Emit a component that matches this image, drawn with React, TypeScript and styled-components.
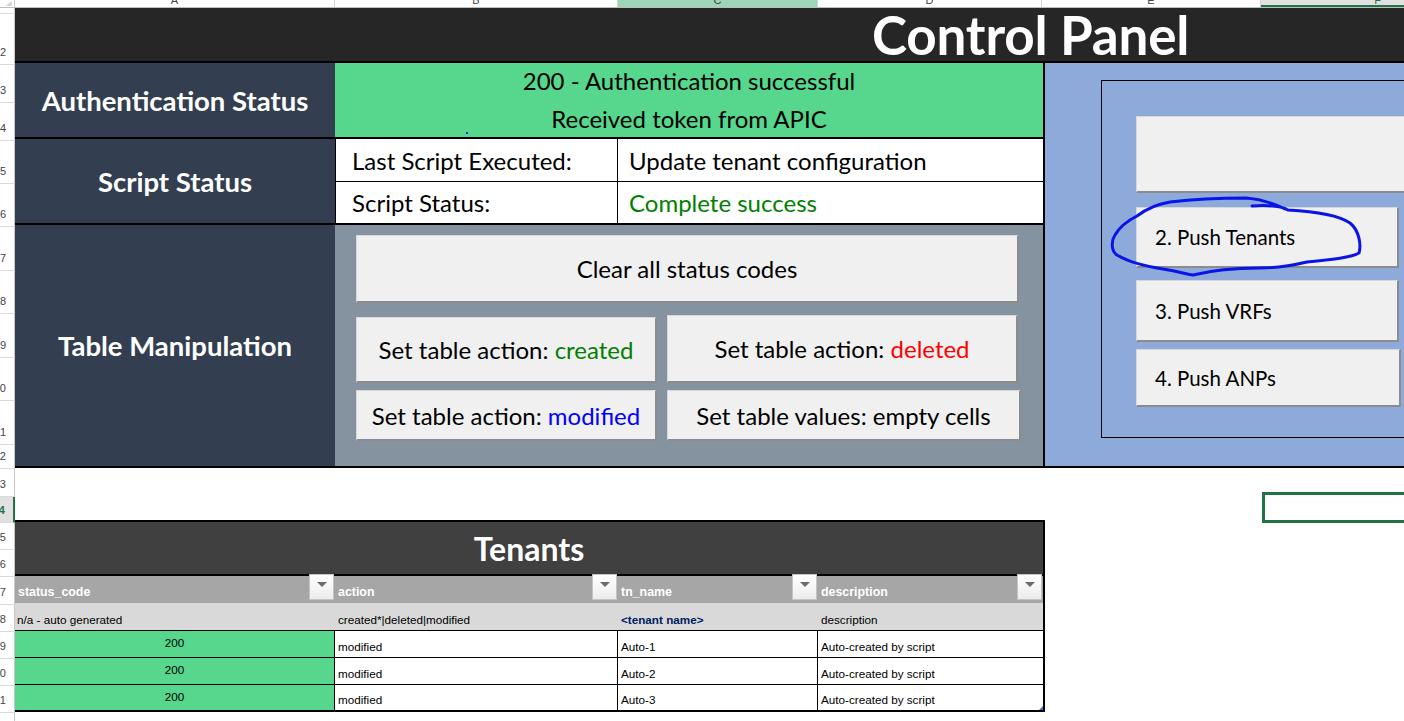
import React from 'react';
import styled, { createGlobalStyle } from 'styled-components';

const Global = createGlobalStyle`
  html, body { margin: 0; padding: 0; background: #ffffff; overflow: hidden; }
  body { width: 1404px; height: 721px; }
  * { box-sizing: border-box; }
`;

const CALIBRI = `'Lato', 'Carlito', 'Open Sans', sans-serif`;
const SMALL = `'Liberation Sans', Arial, sans-serif`;

const Sheet = styled.div`
  width: 1404px;
  height: 721px;
  overflow: hidden;
  display: flex;
  flex-direction: column;
  background: #fff;
`;

/* ---------- column header strip ---------- */
const ColHeaderRow = styled.div`
  display: flex;
  height: 8px;
  flex-shrink: 0;
  border-bottom: 1px solid #bdbdbd;
`;

const Corner = styled.div`
  width: 15px;
  flex-shrink: 0;
  border-right: 1px solid #c8c8c8;
  background: #fff;
  display: flex;
  justify-content: flex-end;
  align-items: flex-end;
  padding: 0 2px 1px 0;
`;

const CornerTri = styled.span`
  width: 0;
  height: 0;
  border-left: 7px solid transparent;
  border-bottom: 5px solid #d6d6d6;
`;

const ColHead = styled.div<{ $w: number; $mode?: 'col' | 'cell' }>`
  width: ${(p) => p.$w}px;
  flex-shrink: 0;
  overflow: hidden;
  display: flex;
  justify-content: center;
  border-right: 1px solid #d4d4d4;
  background: ${(p) => (p.$mode === 'col' ? '#9fd5b7' : p.$mode === 'cell' ? '#e1e1e1' : '#fff')};
  box-shadow: ${(p) => (p.$mode === 'cell' ? 'inset 0 -2px 0 #217346' : 'none')};
`;

const ColLabel = styled.span<{ $active?: boolean }>`
  font-family: ${SMALL};
  font-size: 11px;
  line-height: 11px;
  margin-top: -5px;
  color: ${(p) => (p.$active ? '#217346' : '#444')};
`;

/* ---------- body ---------- */
const Body = styled.div`
  display: flex;
  flex: 1;
  min-height: 0;
`;

const RowHeads = styled.div`
  width: 15px;
  flex-shrink: 0;
  display: flex;
  flex-direction: column;
`;

const RowHead = styled.div<{ $h: number; $active?: boolean }>`
  height: ${(p) => p.$h}px;
  flex-shrink: 0;
  overflow: hidden;
  display: flex;
  align-items: flex-end;
  justify-content: flex-end;
  padding: 0 8px 5px 0;
  line-height: 13px;
  border-bottom: 1px solid #dadada;
  border-right: ${(p) => (p.$active ? '2px solid #217346' : '1px solid #c8c8c8')};
  background: ${(p) => (p.$active ? '#e1e1e1' : '#fff')};
  color: ${(p) => (p.$active ? '#217346' : '#444')};
  font-family: ${SMALL};
  font-weight: ${(p) => (p.$active ? 700 : 400)};
  font-size: 11px;
  white-space: nowrap;
`;

const Content = styled.div`
  width: 1700px;
  flex-shrink: 0;
  display: flex;
  flex-direction: column;
`;

/* ---------- title ---------- */
const TitleBar = styled.div`
  height: 55px;
  flex-shrink: 0;
  background: #262626;
  border-bottom: 2px solid #000;
  padding-left: 857px;
  display: flex;
  align-items: center;
`;

const TitleText = styled.h1`
  margin: 0;
  font-family: ${CALIBRI};
  font-weight: 700;
  font-size: 53px;
  line-height: 1;
  color: #fff;
  letter-spacing: -0.2px;
`;

/* ---------- dashboard ---------- */
const Dashboard = styled.div`
  display: flex;
  height: 405px;
  flex-shrink: 0;
  border-bottom: 2px solid #000;
`;

const LeftCol = styled.div`
  width: 320px;
  flex-shrink: 0;
  display: flex;
  flex-direction: column;
`;

const SectionLabel = styled.div<{ $h?: number; $last?: boolean }>`
  height: ${(p) => (p.$h ? `${p.$h}px` : 'auto')};
  flex: ${(p) => (p.$h ? '0 0 auto' : '1')};
  background: #333f50;
  border-bottom: ${(p) => (p.$last ? 'none' : '2px solid #000')};
  display: flex;
  align-items: center;
  justify-content: center;
  font-family: ${CALIBRI};
  font-weight: 700;
  font-size: 27.5px;
  color: #fff;
`;

const MidCol = styled.div`
  width: 708px;
  flex-shrink: 0;
  display: flex;
  flex-direction: column;
`;

const AuthBlock = styled.div`
  height: 76px;
  flex-shrink: 0;
  background: #57d68d;
  border-bottom: 2px solid #000;
  display: flex;
  flex-direction: column;
  justify-content: center;
  align-items: center;
  position: relative;
  font-family: ${CALIBRI};
  font-size: 24px;
  line-height: 38px;
  color: #000;
`;

const CursorDot = styled.span`
  position: absolute;
  left: 131px;
  top: 69px;
  width: 2px;
  height: 2px;
  background: #1a2bd8;
`;

const ScriptRow = styled.div<{ $last?: boolean }>`
  height: 43px;
  flex-shrink: 0;
  display: flex;
  background: #fff;
  border-left: 1px solid #000;
  border-bottom: ${(p) => (p.$last ? '2px' : '1px')} solid #000;
`;

const ScriptCell = styled.div<{ $w?: number; $pad: number; $color?: string }>`
  width: ${(p) => (p.$w ? `${p.$w}px` : 'auto')};
  flex: ${(p) => (p.$w ? '0 0 auto' : '1')};
  border-right: ${(p) => (p.$w ? '1px solid #000' : 'none')};
  padding-left: ${(p) => p.$pad}px;
  display: flex;
  align-items: center;
  font-family: ${CALIBRI};
  font-size: 24px;
  color: ${(p) => p.$color || '#000'};
  white-space: nowrap;
`;

const ManipPanel = styled.div`
  flex: 1;
  background: #85929f;
  padding: 10px 0 0 21px;
  display: flex;
  flex-direction: column;
`;

const FormButton = styled.div<{ $w: number; $h: number; $mt?: number }>`
  width: ${(p) => p.$w}px;
  height: ${(p) => p.$h}px;
  margin-top: ${(p) => p.$mt || 0}px;
  flex-shrink: 0;
  background: #f0f0f0;
  border-top: 1px solid #d8d8d8;
  border-left: 1px solid #d8d8d8;
  border-right: 2px solid #8c8c8c;
  border-bottom: 2px solid #8c8c8c;
  display: flex;
  align-items: center;
  justify-content: center;
  font-family: ${CALIBRI};
  font-size: 24px;
  color: #000;
  white-space: nowrap;
`;

const ButtonRow = styled.div<{ $mt: number }>`
  display: flex;
  gap: 10px;
  margin-top: ${(p) => p.$mt}px;
  align-items: flex-start;
`;

const Accent = styled.span<{ $c: string }>`
  color: ${(p) => p.$c};
`;

const RightPanel = styled.div`
  flex: 1;
  background: #8eaadb;
  border-left: 2px solid #000;
  padding: 17px 0 0 56px;
  position: relative;
`;

const Frame = styled.div`
  height: 358px;
  border: 1px solid #000;
  border-right: none;
  padding: 35px 0 0 34px;
  display: flex;
  flex-direction: column;
  align-items: flex-start;
`;

const PushButton = styled.div<{ $w: number; $h: number; $mt: number }>`
  width: ${(p) => p.$w}px;
  height: ${(p) => p.$h}px;
  margin-top: ${(p) => p.$mt}px;
  flex-shrink: 0;
  background: #f0f0f0;
  border-top: 1px solid #d8d8d8;
  border-left: 1px solid #d8d8d8;
  border-right: 2px solid #8c8c8c;
  border-bottom: 2px solid #8c8c8c;
  display: flex;
  align-items: center;
  padding-left: 18px;
  font-family: ${CALIBRI};
  font-size: 20.5px;
  color: #000;
`;

const Scribble = styled.svg`
  position: absolute;
  left: 0;
  top: 0;
  width: 400px;
  height: 405px;
  pointer-events: none;
  overflow: visible;
`;

/* ---------- spacer with selection ---------- */
const Spacer = styled.div`
  height: 52px;
  flex-shrink: 0;
  position: relative;
`;

const SelBox = styled.div`
  position: absolute;
  left: 1247px;
  top: 24px;
  width: 220px;
  height: 31px;
  border: 3px solid #217346;
`;

/* ---------- tenants table ---------- */
const Table = styled.div`
  width: 1030px;
  flex-shrink: 0;
  border-right: 2px solid #000;
  border-bottom: 2px solid #000;
  position: relative;
`;

const TableTitle = styled.div`
  height: 56px;
  background: #404040;
  border-top: 2px solid #000;
  border-bottom: 2px solid #000;
  display: flex;
  align-items: center;
  justify-content: center;
  font-family: ${CALIBRI};
  font-weight: 700;
  font-size: 32px;
  color: #fff;
`;

const TRow = styled.div<{ $h: number; $bg?: string; $lined?: boolean }>`
  display: flex;
  height: ${(p) => p.$h}px;
  background: ${(p) => p.$bg || '#fff'};
  border-top: ${(p) => (p.$lined ? '1px solid #000' : 'none')};
`;

const HeadCell = styled.div<{ $w: number }>`
  width: ${(p) => p.$w}px;
  flex-shrink: 0;
  position: relative;
  display: flex;
  align-items: flex-end;
  padding: 0 0 4px 3px;
  font-family: ${SMALL};
  font-weight: 700;
  font-size: 12.4px;
  color: #fff;
`;

const DropBtn = styled.div`
  position: absolute;
  right: 1px;
  top: -2px;
  width: 25px;
  height: 26px;
  border: 1px solid #c4c4c4;
  background: linear-gradient(#ffffff, #ececec);
  display: flex;
  justify-content: center;
  padding-top: 7px;
`;

const Tri = styled.span`
  width: 0;
  height: 0;
  border-left: 5px solid transparent;
  border-right: 5px solid transparent;
  border-top: 5px solid #6b6b6b;
`;

const Cell = styled.div<{ $w: number; $center?: boolean; $bg?: string; $border?: boolean; $color?: string; $bold?: boolean; $pad?: number }>`
  width: ${(p) => p.$w}px;
  flex-shrink: 0;
  display: flex;
  align-items: ${(p) => (p.$center ? 'center' : 'flex-end')};
  justify-content: ${(p) => (p.$center ? 'center' : 'flex-start')};
  padding: ${(p) => (p.$center ? '0 0 3px 0' : `0 0 4px ${p.$pad ?? 3}px`)};
  background: ${(p) => p.$bg || 'transparent'};
  border-right: ${(p) => (p.$border ? '1px solid #000' : 'none')};
  font-family: ${SMALL};
  font-size: 11.7px;
  font-weight: ${(p) => (p.$bold ? 700 : 400)};
  color: ${(p) => p.$color || '#000'};
  white-space: nowrap;
`;

const Handle = styled.span`
  position: absolute;
  right: 0;
  bottom: 0;
  width: 0;
  height: 0;
  border-left: 4px solid transparent;
  border-bottom: 4px solid #4472c4;
`;

const COLS: { key: string; w: number; mode?: 'col' | 'cell' }[] = [
  { key: 'A', w: 320 },
  { key: 'B', w: 283 },
  { key: 'C', w: 200, mode: 'col' },
  { key: 'D', w: 224 },
  { key: 'E', w: 219 },
  { key: 'F', w: 234, mode: 'cell' },
];

const ROWS: { n: number; h: number }[] = [
  { n: 1, h: 4 },
  { n: 2, h: 51 },
  { n: 3, h: 38 },
  { n: 4, h: 38 },
  { n: 5, h: 43 },
  { n: 6, h: 43 },
  { n: 7, h: 44 },
  { n: 8, h: 43 },
  { n: 9, h: 44 },
  { n: 10, h: 43 },
  { n: 11, h: 44 },
  { n: 12, h: 24 },
  { n: 13, h: 28 },
  { n: 14, h: 26 },
  { n: 15, h: 27 },
  { n: 16, h: 27 },
  { n: 17, h: 28 },
  { n: 18, h: 27 },
  { n: 19, h: 27 },
  { n: 20, h: 27 },
  { n: 21, h: 27 },
  { n: 22, h: 27 },
];

const TCOLS = [320, 283, 200, 225];
const HEADERS = ['status_code', 'action', 'tn_name', 'description'];
const DATA = [
  ['200', 'modified', 'Auto-1', 'Auto-created by script'],
  ['200', 'modified', 'Auto-2', 'Auto-created by script'],
  ['200', 'modified', 'Auto-3', 'Auto-created by script'],
];

export default function App() {
  return (
    <>
      <Global />
      <Sheet>
        <ColHeaderRow>
          <Corner>
            <CornerTri />
          </Corner>
          {COLS.map((c) => (
            <ColHead key={c.key} $w={c.w} $mode={c.mode}>
              <ColLabel $active={c.mode === 'cell'}>{c.key}</ColLabel>
            </ColHead>
          ))}
        </ColHeaderRow>
        <Body>
          <RowHeads>
            {ROWS.map((r) => (
              <RowHead key={r.n} $h={r.h} $active={r.n === 14}>
                {r.n > 1 ? r.n : null}
              </RowHead>
            ))}
          </RowHeads>
          <Content>
            <TitleBar>
              <TitleText>Control Panel</TitleText>
            </TitleBar>
            <Dashboard>
              <LeftCol>
                <SectionLabel $h={76}>Authentication Status</SectionLabel>
                <SectionLabel $h={86}>Script Status</SectionLabel>
                <SectionLabel $last>Table Manipulation</SectionLabel>
              </LeftCol>
              <MidCol>
                <AuthBlock>
                  <div>200 - Authentication successful</div>
                  <div>Received token from APIC</div>
                  <CursorDot />
                </AuthBlock>
                <ScriptRow>
                  <ScriptCell $w={282} $pad={16}>Last Script Executed:</ScriptCell>
                  <ScriptCell $pad={11}>Update tenant configuration</ScriptCell>
                </ScriptRow>
                <ScriptRow $last>
                  <ScriptCell $w={282} $pad={16}>Script Status:</ScriptCell>
                  <ScriptCell $pad={11} $color="#008000">Complete success</ScriptCell>
                </ScriptRow>
                <ManipPanel>
                  <FormButton $w={663} $h={68}>Clear all status codes</FormButton>
                  <ButtonRow $mt={12}>
                    <FormButton $w={301} $h={66} $mt={2}>
                      Set table action:&nbsp;<Accent $c="#008000">created</Accent>
                    </FormButton>
                    <FormButton $w={351} $h={68}>
                      Set table action:&nbsp;<Accent $c="#ff0000">deleted</Accent>
                    </FormButton>
                  </ButtonRow>
                  <ButtonRow $mt={7}>
                    <FormButton $w={301} $h={51}>
                      Set table action:&nbsp;<Accent $c="#0000ff">modified</Accent>
                    </FormButton>
                    <FormButton $w={354} $h={51}>Set table values: empty cells</FormButton>
                  </ButtonRow>
                </ManipPanel>
              </MidCol>
              <RightPanel>
                <Frame>
                  <PushButton $w={400} $h={77} $mt={0} />
                  <PushButton $w={263} $h={61} $mt={14}>2. Push Tenants</PushButton>
                  <PushButton $w={263} $h={62} $mt={12}>3. Push VRFs</PushButton>
                  <PushButton $w={265} $h={58} $mt={7}>4. Push ANPs</PushButton>
                </Frame>
                <Scribble viewBox="0 0 400 405">
                  <path
                    d="M 207 143 C 222 142, 236 143, 243 147 C 262 148, 290 150, 305 160 C 315 168, 316 183, 314 190 C 305 195, 285 197, 262 199 C 245 203, 232 205, 215 205 C 195 205, 168 207, 148 212 C 140 211, 132 208, 118 206 C 98 203, 82 198, 72 192 C 66 188, 66 178, 70 172 C 74 165, 82 158, 92 153 C 100 147, 112 141, 125 139 C 150 136, 180 135, 201 135 C 215 136, 226 139, 240 146"
                    fill="none"
                    stroke="#0a14e6"
                    strokeWidth="3"
                    strokeLinecap="round"
                    strokeLinejoin="round"
                  />
                </Scribble>
              </RightPanel>
            </Dashboard>
            <Spacer>
              <SelBox />
            </Spacer>
            <Table>
              <TableTitle>Tenants</TableTitle>
              <TRow $h={27} $bg="#a6a6a6">
                {HEADERS.map((h, i) => (
                  <HeadCell key={h} $w={TCOLS[i]}>
                    {h}
                    <DropBtn>
                      <Tri />
                    </DropBtn>
                  </HeadCell>
                ))}
              </TRow>
              <TRow $h={27} $bg="#d9d9d9">
                <Cell $w={TCOLS[0]} $pad={2}>n/a - auto generated</Cell>
                <Cell $w={TCOLS[1]}>created*|deleted|modified</Cell>
                <Cell $w={TCOLS[2]} $bold $color="#002060">&lt;tenant name&gt;</Cell>
                <Cell $w={TCOLS[3]}>description</Cell>
              </TRow>
              {DATA.map((row, ri) => (
                <TRow key={ri} $h={ri === 2 ? 26 : 27} $lined>
                  {row.map((v, ci) => (
                    <Cell
                      key={ci}
                      $w={TCOLS[ci]}
                      $center={ci === 0}
                      $bg={ci === 0 ? '#57d68d' : undefined}
                      $border={ci < 3}
                    >
                      {v}
                    </Cell>
                  ))}
                </TRow>
              ))}
              <Handle />
            </Table>
          </Content>
        </Body>
      </Sheet>
    </>
  );
}
